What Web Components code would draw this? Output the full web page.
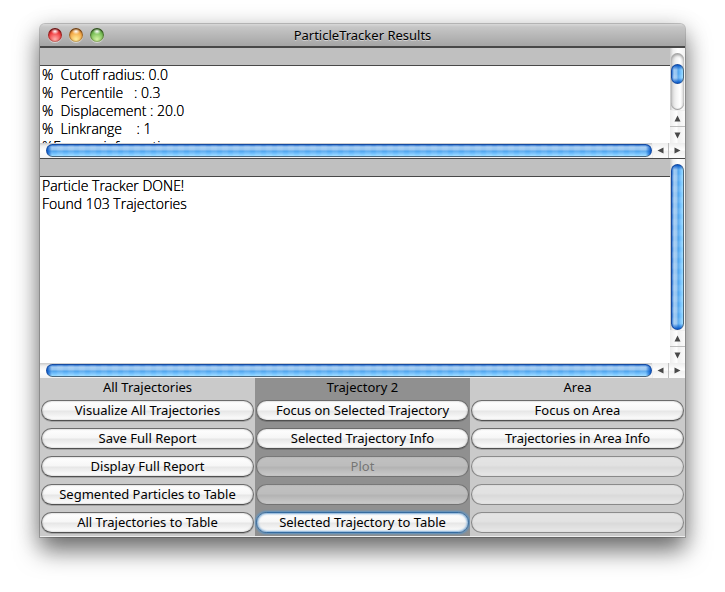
<!DOCTYPE html>
<html lang="en">
<head>
<meta charset="utf-8">
<title>ParticleTracker Results</title>
<style>
  body {
    margin: 0;
    height: 100vh;
    box-sizing: border-box;
    padding: 24px 40px 55px;
    display: flex;
    flex-direction: column;
    background: #fff;
    color: #000;
    font: 13px/18px "Noto Sans", "Open Sans", sans-serif;
  }
</style>
</head>
<body>
<aqua-window heading="ParticleTracker Results">
  <text-pane class="report" thumb-size="20">
    <div>%  Cutoff radius: 0.0</div>
    <div>%  Percentile   : 0.3</div>
    <div>%  Displacement : 20.0</div>
    <div>%  Linkrange    : 1</div>
    <div>%Frames information :</div>
  </text-pane>
  <text-pane class="status" thumb-size="0">
    <div>Particle Tracker DONE!</div>
    <div>Found 103 Trajectories</div>
  </text-pane>
  <action-bar>
    <action-group heading="All Trajectories">
      <aqua-button>Visualize All Trajectories</aqua-button>
      <aqua-button>Save Full Report</aqua-button>
      <aqua-button>Display Full Report</aqua-button>
      <aqua-button>Segmented Particles to Table</aqua-button>
      <aqua-button>All Trajectories to Table</aqua-button>
    </action-group>
    <action-group heading="Trajectory 2" dark>
      <aqua-button>Focus on Selected Trajectory</aqua-button>
      <aqua-button>Selected Trajectory Info</aqua-button>
      <aqua-button disabled>Plot</aqua-button>
      <aqua-button disabled></aqua-button>
      <aqua-button highlighted>Selected Trajectory to Table</aqua-button>
    </action-group>
    <action-group heading="Area">
      <aqua-button>Focus on Area</aqua-button>
      <aqua-button>Trajectories in Area Info</aqua-button>
      <aqua-button disabled></aqua-button>
      <aqua-button disabled></aqua-button>
      <aqua-button disabled></aqua-button>
    </action-group>
  </action-bar>
</aqua-window>

<script>
class AquaElement extends HTMLElement {
  connectedCallback() {
    if (!this.shadowRoot) this.attachShadow({ mode: "open" }).innerHTML = this.render();
  }
}

customElements.define("aqua-window", class extends AquaElement {
  render() {
    return `
    <style>
      :host {
        flex: 1; min-height: 0; display: flex; flex-direction: column;
        border-radius: 5px 5px 0 0; background: #cacaca;
        box-shadow: 0 0 0 1px rgba(0,0,0,.2), 0 14px 24px rgba(0,0,0,.5), 0 4px 24px rgba(0,0,0,.2);
      }
      header {
        display: grid; grid-template-columns: 1fr auto 1fr; align-items: center;
        height: 22px; padding: 0 8px; border-bottom: 2px solid #484848;
        border-radius: 5px 5px 0 0;
        background: linear-gradient(#d8d8d8, #c6c6c6 3px, #a5a5a5);
        box-sizing: content-box;
      }
      h1 { margin: 0; font: inherit; text-shadow: 0 1px 0 rgba(255,255,255,.45); }
      .lights { display: flex; gap: 7px; }
      .lights button {
        width: 14px; height: 14px; padding: 0; border: 0; border-radius: 50%;
        box-shadow: inset 0 1px 2px rgba(0,0,0,.6), inset 0 0 1px 1px rgba(60,30,0,.25), 0 1px 0 rgba(255,255,255,.5);
      }
      .close { background: radial-gradient(ellipse 4px 3px at 50% 24%, #fff, #fff0), radial-gradient(circle at 50% 80%, #ffb0ac, #f0393c 55%, #a8151d); }
      .min { background: radial-gradient(ellipse 4px 3px at 50% 24%, #fff, #fff0), radial-gradient(circle at 50% 80%, #ffee9c, #f5a745 55%, #b75b18); }
      .zoom { background: radial-gradient(ellipse 4px 3px at 50% 24%, #fff, #fff0), radial-gradient(circle at 50% 80%, #d4f5a4, #75bd54 55%, #357b28); }
      main { flex: 1; min-height: 0; display: flex; flex-direction: column; border-bottom: 1px solid #eee; }
      ::slotted(.report) { flex: none; height: 110px; }
      ::slotted(.status) { flex: 1; min-height: 60px; border-top: 1px solid #484848; }
    </style>
    <header>
      <div class="lights">
        <button class="close" aria-label="Close"></button>
        <button class="min" aria-label="Minimize"></button>
        <button class="zoom" aria-label="Zoom"></button>
      </div>
      <h1>${this.getAttribute("heading")}</h1>
    </header>
    <main><slot></slot></main>`;
  }
});

customElements.define("scroll-bar", class extends AquaElement {
  render() {
    const vertical = this.hasAttribute("vertical");
    const start = this.getAttribute("start");
    const size = Number(this.getAttribute("size"));
    const arrow = (d, label) => `<button aria-label="${label}"><svg width="7" height="7" viewBox="0 0 7 7"><path d="${d}" fill="#484848"/></svg></button>`;
    return `
    <style>
      :host {
        display: flex; flex-direction: ${vertical ? "column" : "row"};
        ${vertical ? "width" : "height"}: 15px; box-sizing: border-box;
        --across: to ${vertical ? "right" : "bottom"}; --along: to ${vertical ? "bottom" : "right"};
        background: linear-gradient(var(--across), #c8c8c8, #efefef 3px, #fff 8px, #f2f2f2);
      }
      .track {
        flex: 1; min-width: 0; min-height: 0; display: flex; flex-direction: inherit;
        padding-${vertical ? "top" : "left"}: ${start}px;
      }
      .well {
        flex: 1; display: flex; flex-direction: inherit; border-radius: 8px;
        padding-${vertical ? "top" : "left"}: ${size ? 11 : 0}px;
        margin: ${vertical ? "0 1px" : "1px 0"};
        ${size ? "background: linear-gradient(to right, #d4d4d4, #f2f2f2 5px, #fff 9px, #e5e5e5); box-shadow: inset 0 2px 3px #999, inset 0 -1px 1px #999;" : ""}
      }
      .thumb {
        flex: ${size ? "0 0 " + size + "px" : "1"}; border-radius: 7px; box-sizing: border-box;
        border: 1px solid #174ba0; border-${vertical ? "right" : "bottom"}-color: #49677e;
        background:
          linear-gradient(var(--along), #0758c8, #0758c800 5px, #0758c800 calc(100% - 5px), #0758c8),
          repeating-linear-gradient(var(--along), #ffffff18 0 4px, #ffffff00 6px 9px, #ffffff18 11px),
          linear-gradient(var(--across), #2870cf, #a5cdf3 2px, #8fc2f0 5px, #4fa3ec 6px, #79c5ff 9px, #a9e6ff 12px);
      }
      button {
        flex: none; padding: 0; border: 0 solid #bdbdbd; border-${vertical ? "top" : "left"}-width: 1px;
        ${vertical ? "height" : "width"}: 16px; ${vertical ? "width" : "height"}: 15px;
        display: grid; place-items: center;
        background: linear-gradient(var(--across), #ededed, #fff 7px, #f1f1f1 8px, #fafafa);
      }
      button:last-child { ${vertical ? "height" : "width"}: 17px; }
      .track + button { border-color: #eee; }
      svg { display: block; }
    </style>
    <div class="track"><div class="well"><div class="thumb"></div></div></div>
    ${vertical
      ? arrow("M3.5 0.5 6.5 6.5H0.5Z", "Scroll up") + arrow("M0.5 0.5H6.5L3.5 6.5Z", "Scroll down")
      : arrow("M0.5 3.5 6.5 0.5V6.5Z", "Scroll left") + arrow("M0.5 0.5 6.5 3.5 0.5 6.5Z", "Scroll right")}`;
  }
});

customElements.define("text-pane", class extends AquaElement {
  render() {
    return `
    <style>
      :host { display: flex; flex-direction: column; box-sizing: border-box; background: #fff; }
      .row { flex: 1; min-height: 0; display: flex; }
      .view { flex: 1; min-width: 0; display: flex; flex-direction: column; }
      .head { flex: none; height: 17px; background: #c0c0c0; border-bottom: 1px solid #484848; }
      .log {
        flex: 1; min-height: 0; overflow: hidden; padding-left: 2px; white-space: pre;
        font: 300 14px/18px "Open Sans", Lato, sans-serif; text-shadow: 0 0 0 #000;
      }
      ::slotted(div) { height: 18px; }
    </style>
    <div class="row">
      <div class="view"><div class="head"></div><div class="log"><slot></slot></div></div>
      <scroll-bar vertical start="5" size="${this.getAttribute("thumb-size")}"></scroll-bar>
    </div>
    <scroll-bar start="6" size="0"></scroll-bar>`;
  }
  connectedCallback() {
    super.connectedCallback();
    for (const node of [...this.childNodes]) if (node.nodeType === 3) node.remove();
  }
});

customElements.define("action-bar", class extends AquaElement {
  render() {
    return `
    <style>:host { flex: none; display: grid; grid-template-columns: repeat(3, 1fr); }</style>
    <slot></slot>`;
  }
});

customElements.define("action-group", class extends AquaElement {
  render() {
    return `
    <style>
      :host { display: flex; flex-direction: column; gap: 7px; padding: 0 1px 3px; background: #cacaca; }
      :host([dark]) { background: #909090; }
      h2 { margin: 0 0 -7px; height: 22px; font: inherit; text-align: center; }
    </style>
    <h2>${this.getAttribute("heading")}</h2>
    <slot></slot>`;
  }
});

customElements.define("aqua-button", class extends AquaElement {
  render() {
    return `
    <style>
      :host { display: flex; height: 21px; }
      button {
        flex: 1; min-width: 0; padding: 0 8px; color: #000; font: inherit; line-height: 19px; white-space: nowrap;
        border: 1px solid #6c6c6c; border-bottom-color: #505050; border-radius: 11px;
        background: linear-gradient(#fff, #f6f6f6 9px, #e6e6e6 10px, #fff 19px);
        box-shadow: inset 0 0 2px rgba(0,0,0,.35), 0 1px 0 rgba(0,0,0,.18);
      }
      button:disabled {
        color: #0006; border-color: #0006;
        background: linear-gradient(#ffffff80, #ffffff70 9px, #ffffff48 10px, #ffffff90 19px);
        box-shadow: inset 0 0 2px rgba(0,0,0,.12);
      }
      :host-context([dark]) button:disabled {
        background: linear-gradient(#ffffff70, #ffffff68 9px, #ffffff50 10px, #ffffff88 19px);
      }
      :host([highlighted]) button {
        border-color: #356b9f;
        box-shadow: inset 0 0 2px 1px #7aa9d4, 0 0 2px 1px #5c93c4;
      }
    </style>
    <button type="button"${this.hasAttribute("disabled") ? " disabled" : ""}><slot></slot></button>`;
  }
});
</script>
</body>
</html>
